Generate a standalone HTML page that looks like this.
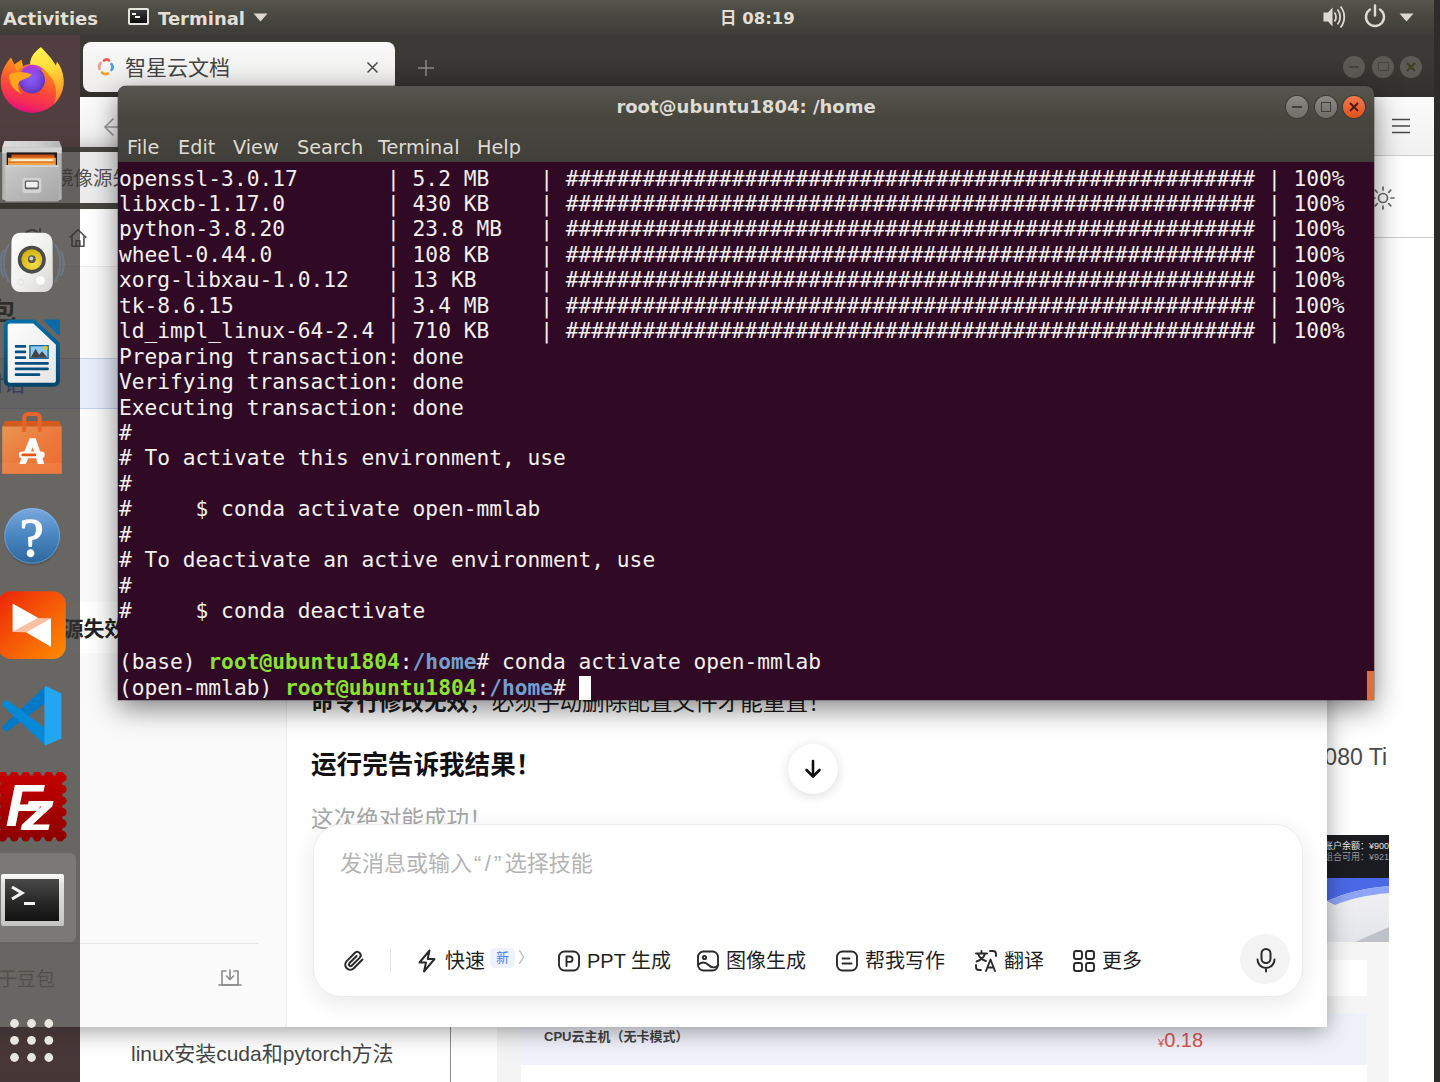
<!DOCTYPE html>
<html lang="zh">
<head>
<meta charset="utf-8">
<title>Terminal</title>
<style>
*{box-sizing:border-box;margin:0;padding:0}
html,body{width:1440px;height:1082px;overflow:hidden;background:#3c2f38}
body{position:relative;font-family:"Liberation Sans","Noto Sans CJK SC",sans-serif;color:#222}
.abs{position:absolute}
/* ---------- wallpaper under dock ---------- */
#wall{left:0;top:0;width:80px;height:1082px;background:linear-gradient(#a66476 0,#a06072 15%,#7a4452 100%)}
/* ---------- firefox ---------- */
#ff{left:80px;top:35px;width:1354px;height:1047px;background:#fff;overflow:hidden}
#fftabs{left:0;top:0;width:1354px;height:62px;background:linear-gradient(#3c3b37 0,#3a3935 40%,#31302d 100%)}
#fftab{left:3px;top:7px;width:312px;height:50px;background:linear-gradient(#f8f8f8,#efeeed);border-radius:8px}
#fftab .t{left:42px;top:12px;font-size:21px;color:#444;white-space:nowrap;line-height:28px}
#ffnav{left:0;top:62px;width:1354px;height:59px;background:linear-gradient(#fbfbfb,#f1f1f1);border-bottom:1px solid #cfcfcf}
#ffhead{left:0;top:121px;width:1354px;height:82px;background:#fff;border-bottom:1px solid #cdcdcd}
#ffpage{left:0;top:203px;width:1354px;height:844px;background:#fff}
/* ---------- doubao ---------- */
#db{left:-60px;top:147px;width:1387px;height:880px;background:#fff;box-shadow:0 4px 22px rgba(0,0,0,.38);overflow:hidden}
/* ---------- dock ---------- */
#dock{left:0;top:35px;width:80px;height:1047px;background:rgba(52,50,46,.74)}
/* ---------- terminal ---------- */
#term{left:118px;top:86px;width:1256px;height:614px;border-radius:8px 8px 0 0;box-shadow:0 8px 28px rgba(0,0,0,.5),0 0 0 .5px rgba(40,40,36,.5);overflow:hidden;background:#300a24}
#tbar{left:0;top:0;width:1256px;height:76px;background:linear-gradient(#56554f 0,#48473f 40%,#403f3a 100%)}
#tbar .title{left:0;top:8px;width:1256px;text-align:center;font-weight:bold;font-size:18px;color:#dfdbd2;line-height:26px;font-family:"DejaVu Sans","Liberation Sans",sans-serif}
#tmenu{left:9px;top:48.5px;font-size:19.3px;color:#dfdbd2;white-space:nowrap;line-height:26px;font-family:"DejaVu Sans","Liberation Sans",sans-serif}
#tmenu span{position:absolute;top:0}
#tout{left:1px;top:79.5px;font-family:"DejaVu Sans Mono","Liberation Mono",monospace;font-size:21.21px;line-height:25.45px;color:#f2f0ee;white-space:pre}
#tout b.g{color:#8ae234}
#tout b.b{color:#729fcf}
.cur{display:inline-block;width:12px;height:24px;background:#fff;vertical-align:-5px}

/* firefox details */
.wbtn{width:22px;height:22px;border-radius:50%;background:#5b5a54;top:21px}
#ffpage .sideline{left:370px;top:0;width:1px;height:844px;background:#8e8e8e}
/* doubao details */
#db .line1{left:0;top:0;width:1387px;height:5px;background:#46453f}
#db .tabs{left:0;top:5px;width:1387px;height:51px;background:#ececec}
#db .line2{left:0;top:56px;width:1387px;height:6px;background:#47463f}
#db .tool{left:0;top:62px;width:1387px;height:58px;background:#fff;border-bottom:1px solid #ececec}
#db .side{left:0;top:120px;width:347px;height:760px;background:#fafafa;border-right:1px solid #ececec}
#db .main{left:348px;top:120px;width:1039px;height:760px;background:#fff}
#db .sel{left:0;top:211px;width:330px;height:51px;background:#e8edfb;border:1px solid #c3d0f3}
#db .row2{left:130px;top:455px;width:210px;height:51px;background:#fff;border-radius:8px}
#inp{left:373px;top:677px;width:990px;height:173px;border-radius:28px;background:#fff;border:1px solid #ececec;box-shadow:0 6px 24px rgba(0,0,0,.09)}
.tb{top:122px;font-size:20px;color:#1f1f1f;white-space:nowrap;line-height:28px}
/* ---------- top panel ---------- */
#panel{left:0;top:0;width:1440px;height:35px;background:linear-gradient(#56554d 0,#48473f 50%,#3d3c38 100%);color:#e3dfd6;font-weight:bold;font-size:18px;font-family:"DejaVu Sans","Liberation Sans","Noto Sans CJK SC",sans-serif}
#panel .p{top:5.5px;line-height:26px;white-space:nowrap}
#redge{left:1434px;top:0;width:6px;height:1082px;background:#2c2c2b}
</style>
</head>
<body>
<div id="wall" class="abs"></div>

<!-- FIREFOX WINDOW -->
<div id="ff" class="abs">
  <div id="fftabs" class="abs">
    <div id="fftab" class="abs">
      <svg class="abs" style="left:13px;top:15px" width="20" height="20" viewBox="0 0 20 20" fill="none" stroke-width="2.600" stroke-linecap="round"><path d="M8 3.500c1.500-1.500 4-1.500 5 0" stroke="#e85a4f"/><path d="M15.500 7c1.500 2 1.300 4.500 0 6" stroke="#4a9be8"/><path d="M12 16.500c-2 1-4.500.5-6-1" stroke="#f0a030"/><path d="M3.500 12c-.8-2-.3-4.500 1.200-6" stroke="#e85a4f" opacity=".6"/></svg>
      <div class="t abs">智星云文档</div>
      <svg class="abs" style="left:283px;top:19px" width="13" height="13" viewBox="0 0 13 13" stroke="#4a4a4a" stroke-width="1.500"><path d="M1.500 1.500l10 10M11.500 1.500l-10 10"/></svg>
    </div>
    <svg class="abs" style="left:337px;top:24px" width="18" height="18" viewBox="0 0 18 18" stroke="#8d8c88" stroke-width="1.500"><path d="M9 1v16M1 9h16"/></svg>
    <div class="wbtn abs" style="left:1263px"><div class="abs" style="left:6px;top:10px;width:10px;height:2px;background:#46453f"></div></div>
    <div class="wbtn abs" style="left:1292px"><div class="abs" style="left:6px;top:6px;width:11px;height:9px;border:1.500px solid #46453f"></div></div>
    <div class="wbtn abs" style="left:1320px"><svg class="abs" style="left:6px;top:6px" width="10" height="10" viewBox="0 0 10 10" stroke="#3e3d20" stroke-width="1.800"><path d="M1 1l8 8M9 1l-8 8"/></svg></div>
  </div>
  <div id="ffnav" class="abs">
    <svg class="abs" style="left:23px;top:19px" width="22" height="22" viewBox="0 0 22 22" fill="none" stroke="#9a9a9a" stroke-width="1.700" stroke-linecap="round" stroke-linejoin="round"><path d="M20 11H2M10 3l-8 8 8 8"/></svg>
    <svg class="abs" style="left:1312px;top:21px" width="18" height="16" viewBox="0 0 18 16" stroke="#4a4a4a" stroke-width="1.700"><path d="M0 1.500h18M0 8h18M0 14.500h18"/></svg>
  </div>
  <div id="ffhead" class="abs">
    <svg class="abs" style="left:1290px;top:29px" width="26" height="26" viewBox="0 0 26 26" fill="none" stroke="#6b6b6b" stroke-width="1.700" stroke-linecap="round"><circle cx="13" cy="13" r="4.500"/><path d="M13 2v3M13 21v3M2 13h3M21 13h3M5.200 5.200l2.100 2.100M18.700 18.700l2.100 2.100M5.200 20.800l2.100-2.100M18.700 7.300l2.100-2.100"/></svg>
  </div>
  <div id="ffpage" class="abs">
    <div class="sideline abs"></div>
    <div class="abs" style="left:51px;top:801px;font-size:21px;line-height:30px;color:#454545;white-space:nowrap">linux安装cuda和pytorch方法</div>
    <div class="abs" style="left:417px;top:780px;width:24px;height:64px;background:#f3f3f4"></div>
    <div class="abs" style="left:441px;top:780px;width:774px;height:47px;background:#f0f1fa"></div>
    <div class="abs" style="left:464px;top:789px;font-size:13px;font-weight:bold;line-height:20px;color:#444;white-space:nowrap">CPU云主机（无卡模式）</div>
    <div class="abs" style="left:1078px;top:789px;font-size:20px;line-height:26px;color:#d8554f;white-space:nowrap"><span style="font-size:11px">¥</span>0.18</div>
    <div class="abs" style="left:1130px;top:503px;width:177px;font-size:23px;line-height:32px;color:#4a4a4a;white-space:nowrap;text-align:right">RTX 2080 Ti</div>
    <div class="abs" style="left:1215px;top:704px;width:94px;height:140px;background:#f5f5f6"></div>
    <svg class="abs" style="left:1215px;top:597px" width="94" height="107" viewBox="0 0 94 107"><defs><linearGradient id="sw9" x1="0" y1="0" x2="0" y2="1"><stop offset="0" stop-color="#dfe1ea"/><stop offset=".5" stop-color="#f1f1f4"/><stop offset="1" stop-color="#e4e5ea"/></linearGradient></defs><rect width="94" height="107" fill="url(#sw9)"/><path d="M0 43h94v8C70 53 50 58 32 66H0z" fill="#4b69e6"/><path d="M32 66C50 58 70 53 94 51v7C72 60 54 64 40 70z" fill="#8ea4f6"/><path d="M94 92L60 107h34z" fill="#bfc1c9"/></svg>
    <div class="abs" style="left:1215px;top:597px;width:94px;height:43px;background:#1b1b22;color:#e8e8e8;font-size:9px;line-height:11px;white-space:nowrap;overflow:hidden;padding:6px 0 0 29px">账户余额：¥900.00<br><span style="color:#9a9a9a">组合可用：¥921.00</span></div>
    <div class="abs" style="left:1215px;top:722px;width:72px;height:36px;background:#fff"></div>
    <div class="abs" style="left:1215px;top:775px;width:72px;height:52px;background:#f0f2fb"></div>
    <div class="abs" style="left:1215px;top:827px;width:72px;height:20px;background:#fff"></div>
  </div>
</div>

<!-- DOUBAO WINDOW -->
<div id="db" class="abs">
  <div class="line1 abs"></div>
  <div class="tabs abs"><div class="abs" style="left:88px;top:12px;font-size:19.5px;line-height:28px;color:#555;white-space:nowrap">pip镜像源失效修复</div></div>
  <div class="line2 abs"></div>
  <div class="tool abs">
    <svg class="abs" style="left:80px;top:17px" width="24" height="24" viewBox="0 0 24 24" fill="none" stroke="#555" stroke-width="1.8" stroke-linecap="round" stroke-linejoin="round"><path d="M20 12a8 8 0 1 1-2.6-5.9"/><path d="M20 3v5h-5"/></svg>
    <svg class="abs" style="left:127px;top:18px" width="22" height="22" viewBox="0 0 24 24" fill="none" stroke="#555" stroke-width="1.8" stroke-linejoin="round"><path d="M3 11.5 12 3l9 8.5"/><path d="M5.5 10v11h13V10"/><path d="M10 21v-6h4v6"/></svg>
  </div>
  <div class="side abs"></div>
  <div class="abs" style="left:26px;top:147px;font-size:25px;font-weight:bold;color:#222;line-height:34px;white-space:nowrap">豆包</div>
  <div class="sel abs"><div class="abs" style="left:21px;top:11px;font-size:21px;line-height:28px;color:#3a62d8;white-space:nowrap">新对话</div></div>
  <div class="row2 abs"></div>
  <div class="abs" style="left:49px;top:467px;font-size:21px;font-weight:bold;line-height:30px;color:#222;white-space:nowrap">pip镜像源失效修复</div>
  <div class="abs" style="left:0;top:796px;width:318px;height:1px;background:#e6e6e6"></div>
  <div class="abs" style="left:39px;top:819px;font-size:19px;line-height:28px;color:#a4a4a4;white-space:nowrap">关于豆包</div>
  <svg class="abs" style="left:278px;top:820px" width="24" height="22" viewBox="0 0 24 22" fill="none" stroke="#8a8a8a" stroke-width="1.6" stroke-linecap="round" stroke-linejoin="round"><path d="M8 4H4v14h16V4h-4"/><path d="M1 18h22"/><path d="M12 3v9"/><path d="M8.5 9l3.500 3.500L15.500 9"/></svg>
  <div class="main abs"></div>
  <div class="abs" style="left:371px;top:541px;font-size:22.6px;line-height:30px;color:#1d1d1d;white-space:nowrap"><b>命令行修改无效</b>，必须手动删除配置文件才能重置！</div>
  <div class="abs" style="left:371px;top:601px;font-size:25.6px;font-weight:bold;line-height:34px;color:#111;white-space:nowrap">运行完告诉我结果！</div>
  <div class="abs" style="left:371px;top:658px;font-size:22.6px;line-height:30px;color:#a6a6a6;white-space:nowrap">这次绝对能成功！</div>
  <div class="abs" style="left:848px;top:597px;width:50px;height:50px;border-radius:50%;background:#fff;box-shadow:0 2px 12px rgba(0,0,0,.14)">
    <svg class="abs" style="left:13px;top:13px" width="24" height="24" viewBox="0 0 24 24" fill="none" stroke="#111" stroke-width="2.6" stroke-linecap="round" stroke-linejoin="round"><path d="M12 4v15"/><path d="M5.500 13l6.500 6.500 6.500-6.500"/></svg>
  </div>
  <div id="inp" class="abs">
    <div class="abs" style="left:26px;top:24px;font-size:22px;line-height:30px;color:#b4b4b4;white-space:nowrap">发消息或输入<span style="letter-spacing:3.3px;margin-left:2px">“/”</span>选择技能</div>
    <div class="abs" style="left:76px;top:124px;width:1px;height:24px;background:#e4e4e4"></div>
    <div class="tb abs" style="left:131px">快速</div>
    <div class="abs" style="left:176px;top:123px;width:25px;height:20px;border-radius:5px;background:#eef3ff;color:#4a7cf3;font-size:13px;line-height:20px;text-align:center">新</div>
    <div class="abs" style="left:204px;top:122px;font-size:15px;line-height:22px;color:#b0b0b0">〉</div>
    <div class="tb abs" style="left:273px">PPT 生成</div>
    <div class="tb abs" style="left:412px">图像生成</div>
    <div class="tb abs" style="left:551px">帮我写作</div>
    <div class="tb abs" style="left:690px">翻译</div>
    <div class="tb abs" style="left:788px">更多</div>
    <div class="abs" style="left:926px;top:109px;width:50px;height:50px;border-radius:50%;background:#f3f3f4"></div>
    <svg class="abs" style="left:27px;top:123px" width="26" height="26" viewBox="0 0 26 26" fill="none" stroke="#2a2a2a" stroke-width="2" stroke-linecap="round" stroke-linejoin="round"><path d="M21.500 11.500 12.800 20.200a5 5 0 0 1-7.100-7.100l8.300-8.300a3.400 3.400 0 0 1 4.800 4.800l-8.100 8.100a1.700 1.700 0 0 1-2.400-2.400l7.300-7.300"/></svg>
    <svg class="abs" style="left:101px;top:123px" width="24" height="26" viewBox="0 0 24 26" fill="none" stroke="#2a2a2a" stroke-width="2" stroke-linecap="round" stroke-linejoin="round"><path d="M14.500 2.500 4.500 14.500h6.500l-2 9 10.500-12.500h-6.800z"/></svg>
    <svg class="abs" style="left:243px;top:124px" width="24" height="24" viewBox="0 0 24 24" fill="none" stroke="#2a2a2a" stroke-width="1.9" stroke-linecap="round" stroke-linejoin="round"><rect x="2" y="2.500" width="20" height="19" rx="5.500"/><path d="M9.500 17V7.500h3.300a2.700 2.700 0 0 1 0 5.400H9.500"/></svg>
    <svg class="abs" style="left:382px;top:124px" width="24" height="24" viewBox="0 0 24 24" fill="none" stroke="#2a2a2a" stroke-width="1.900" stroke-linecap="round" stroke-linejoin="round"><rect x="2" y="2.500" width="20" height="19" rx="5.500"/><circle cx="8.500" cy="8.500" r="1.600"/><path d="M2.500 15.500c4-3.500 7-2.500 10 .5s6 3 9 1"/></svg>
    <svg class="abs" style="left:521px;top:124px" width="24" height="24" viewBox="0 0 24 24" fill="none" stroke="#2a2a2a" stroke-width="1.900" stroke-linecap="round" stroke-linejoin="round"><rect x="2" y="2.500" width="20" height="19" rx="5.500"/><path d="M7.500 9.500h7M7.500 14.500h9"/></svg>
    <svg class="abs" style="left:659px;top:123px" width="26" height="26" viewBox="0 0 26 26" fill="none" stroke="#2a2a2a" stroke-width="1.900" stroke-linecap="round" stroke-linejoin="round"><path d="M3 5.500h11M8.500 3v2.500M5 5.500c1.200 4 4.500 6.500 8 7.500M12 5.500C11 9.500 8 12 3.500 13.500"/><path d="M13 23l4.500-11.500L22 23M14.700 19.500h5.600"/><path d="M17 3h3a3 3 0 0 1 3 3v2M3 17v2a3 3 0 0 0 3 3h2"/></svg>
    <svg class="abs" style="left:758px;top:123px" width="24" height="26" viewBox="0 0 24 26" fill="none" stroke="#2a2a2a" stroke-width="1.900" stroke-linejoin="round"><rect x="2" y="3" width="8" height="8" rx="2.300"/><rect x="14" y="3" width="8" height="8" rx="2.300"/><rect x="2" y="15" width="8" height="8" rx="2.300"/><rect x="14" y="15" width="8" height="8" rx="2.300"/></svg>
    <svg class="abs" style="left:939px;top:121px" width="26" height="28" viewBox="0 0 26 28" fill="none" stroke="#2a2a2a" stroke-width="2" stroke-linecap="round" stroke-linejoin="round"><rect x="8.500" y="3" width="9" height="14" rx="4.500"/><path d="M4.500 13.500a8.500 8.500 0 0 0 17 0M13 22v3.500"/></svg>
  </div>
</div>

<!-- DOCK -->
<div id="dock" class="abs">
  <!-- firefox -->
  <svg class="abs" style="left:0;top:3px" width="68" height="80" viewBox="0 0 68 80">
    <defs>
      <linearGradient id="fx1" gradientUnits="userSpaceOnUse" x1="40" y1="10" x2="22" y2="75"><stop offset="0" stop-color="#ffb01a"/><stop offset=".3" stop-color="#ff8a1a"/><stop offset=".62" stop-color="#ff4a38"/><stop offset=".85" stop-color="#f3285a"/><stop offset="1" stop-color="#de0a86"/></linearGradient>
      <radialGradient id="fx2" gradientUnits="userSpaceOnUse" cx="31" cy="41" r="15"><stop offset="0" stop-color="#8a5ff8"/><stop offset=".55" stop-color="#7a48e0"/><stop offset="1" stop-color="#5a35b5"/></radialGradient>
      <linearGradient id="fx3" gradientUnits="userSpaceOnUse" x1="42" y1="9" x2="56" y2="66"><stop offset="0" stop-color="#fff550"/><stop offset=".4" stop-color="#ffd93a"/><stop offset=".75" stop-color="#ffa92a"/><stop offset="1" stop-color="#ff7a30"/></linearGradient>
      <linearGradient id="fx4" gradientUnits="userSpaceOnUse" x1="31" y1="27" x2="31" y2="42"><stop offset="0" stop-color="#c032dc"/><stop offset="1" stop-color="#8a5ff8" stop-opacity="0"/></linearGradient>
    </defs>
    <path d="M11 19.600C5 26 .7 35 .7 44 .7 61 15 74.700 32 74.700c18 0 31.600-13.700 31.600-30.700 0-8-2.600-15-6.600-20l-1 4C52 20 45 14 41 9.200 35 13 30 20 30.300 26c-2.300 0-5.300 1-7.300 2.500l-1.600-6.700-6.900 4.700z" fill="url(#fx1)"/>
    <path d="M41 9.200C45 14 52 20 56 28l1-4c4 5 6.600 12 6.600 20 0 8-3.600 16-9.600 22 4-10 2-22-4-28-4-5-6-8-12-10-5-1-7.700 0-7.700-2C30 20 35 13 41 9.200z" fill="url(#fx3)"/>
    <circle cx="31.800" cy="42.100" r="13.300" fill="url(#fx2)"/>
    <path d="M22 31c5-5 14-5.500 19-1.500l3 2.500-5 .5c3 3 5 6 5.500 9.500H20c-.5-4 .5-8 2-11z" fill="url(#fx4)"/>
    <path d="M9 37c5-4 15-4 23-.5-4 4.500-10 4.500-13 7.500-2 4 0 9 3 12-8-3-13-10-13-19z" fill="#ffa51e"/>
    <path d="M14.500 26.500l6.900-4.700L23 28.500c-3 1.500-5 3.500-6 5.500z" fill="#ff9a1c"/>
  </svg>
  <!-- files -->
  <svg class="abs" style="left:2px;top:106px" width="60" height="62" viewBox="0 0 60 62">
    <defs><linearGradient id="fl1" x1="0" y1="0" x2="1" y2="0"><stop offset="0" stop-color="#dcdcdc"/><stop offset=".6" stop-color="#cdcdcd"/><stop offset="1" stop-color="#b4b4b4"/></linearGradient>
    <linearGradient id="fl2" x1="0" y1="0" x2="1" y2="1"><stop offset="0" stop-color="#cacaca"/><stop offset="1" stop-color="#a6a6a6"/></linearGradient>
    <linearGradient id="fl3" x1="0" y1="0" x2="0" y2="1"><stop offset="0" stop-color="#c24a12"/><stop offset="1" stop-color="#ea7a2a"/></linearGradient></defs>
    <rect x=".2" y="6" width="59.500" height="53" rx="1.500" fill="#b2b2b2"/>
    <path d="M2.400 0h54.800l2.500 6.300H.2z" fill="url(#fl1)"/>
    <rect x=".2" y="6.300" width="59.500" height="6" fill="#d2d2d2"/>
    <rect x="4.700" y="11.400" width="50.300" height="13" fill="#1c1a18"/>
    <rect x="9.500" y="13.500" width="43" height="6" fill="url(#fl3)"/>
    <rect x="6" y="16.800" width="47.800" height="7.600" fill="#f2a648"/>
    <rect x="6" y="20.300" width="47.800" height="1.600" fill="#e07a2c"/>
    <rect x="8.700" y="18.200" width="42.500" height="1.900" fill="#fbecd6"/>
    <rect x="3.200" y="24.300" width="53.600" height="36.200" rx="1.200" fill="url(#fl2)"/>
    <rect x="3.200" y="24.300" width="53.600" height="1.600" fill="#d8d8d8"/>
    <rect x="20.200" y="36.900" width="19.200" height="15.100" rx="3" fill="#d3d3d3"/>
    <rect x="22.800" y="39.500" width="14" height="8.800" rx="1.600" fill="#5c5c5c"/>
    <rect x="24" y="40.800" width="11.700" height="5.700" rx="1" fill="#f0f0f0"/>
  </svg>
  <!-- rhythmbox -->
  <svg class="abs" style="left:0;top:195px" width="68" height="66" viewBox="0 0 68 66">
    <defs><linearGradient id="rb1" x1="0" y1="0" x2="1" y2="1"><stop offset="0" stop-color="#ffffff"/><stop offset=".55" stop-color="#efefee"/><stop offset="1" stop-color="#d6d6d4"/></linearGradient>
    <radialGradient id="rb2" cx=".6" cy=".7" r=".7"><stop offset="0" stop-color="#f5e04a"/><stop offset="1" stop-color="#d2b010"/></radialGradient></defs>
    <g fill="none" stroke="#7da2d4" stroke-width="2.200" opacity=".28"><path d="M9 14c-7 11-7 27 0 38M3.500 20c-4 8-4 19 0 27M55 14c7 11 7 27 0 38M61 21c3.500 8 3.500 17 0 25"/></g>
    <path d="M20 2.700h23.500c5 0 8.400 3.500 9 9l.4 40c0 6-3.600 10.200-9.400 10.200H20.500c-5.800 0-9.400-4.200-9.400-10.200l.4-40c.6-5.500 3.500-9 8.500-9z" fill="url(#rb1)"/>
    <circle cx="31.800" cy="29.700" r="14" fill="#4b4c4a"/>
    <circle cx="31.800" cy="29.700" r="10.400" fill="url(#rb2)"/>
    <circle cx="31.800" cy="29.200" r="3.900" fill="#5a5850"/>
    <circle cx="31.300" cy="28.600" r="2" fill="#cfcfcf"/>
    <circle cx="40.300" cy="50.400" r="5" fill="#fbfbfb" stroke="#dadad8" stroke-width=".8"/>
    <circle cx="21" cy="52.300" r="2.800" fill="none" stroke="#dededc" stroke-width=".8"/>
  </svg>
  <!-- writer -->
  <svg class="abs" style="left:3px;top:283px" width="60" height="72" viewBox="0 0 60 72">
    <defs><linearGradient id="wr1" x1="0" y1="0" x2="0" y2="1"><stop offset="0" stop-color="#056ea8"/><stop offset="1" stop-color="#04456c"/></linearGradient>
    <linearGradient id="wr2" x1="0" y1="0" x2="1" y2="1"><stop offset="0" stop-color="#ffffff"/><stop offset="1" stop-color="#e4e4e4"/></linearGradient></defs>
    <path d="M42 1.400h13.400a1.500 1.500 0 0 1 1.500 1.500V16.500a1 1 0 0 1-1.700.7L41.300 3a1 1 0 0 1 .7-1.600z" fill="#0a6ba8"/>
    <path d="M6.700 3.400H30.900L54.900 25.800V62.700a4 4 0 0 1-4 4H6.700a4 4 0 0 1-4-4V7.400a4 4 0 0 1 4-4z" fill="url(#wr2)" stroke="url(#wr1)" stroke-width="4" stroke-linejoin="round"/>
    <g fill="#04507f"><rect x="11.800" y="27" width="11.400" height="2.700" rx="1"/><rect x="11.800" y="32.500" width="11.400" height="2.700" rx="1"/><rect x="11.800" y="38.200" width="11.400" height="2.700" rx="1"/><rect x="11.800" y="44" width="34" height="2.700" rx="1"/><rect x="11.800" y="49.600" width="34" height="2.700" rx="1"/><rect x="11.800" y="55.200" width="25.500" height="2.700" rx="1"/></g>
    <rect x="26.200" y="27" width="19.600" height="14" fill="#0a68a4"/>
    <rect x="27.600" y="28.300" width="16.800" height="11.400" fill="#8ecbf2"/>
    <path d="M27.600 39.700l5-9 3.500 6 3-3.500 5.300 6.500z" fill="#454545"/>
    <circle cx="42.600" cy="30" r="2.200" fill="#e8c22c"/>
  </svg>
  <!-- software -->
  <svg class="abs" style="left:1px;top:375px" width="62" height="66" viewBox="0 0 62 66">
    <defs><linearGradient id="sw1" x1="0" y1="0" x2="1" y2="1"><stop offset="0" stop-color="#e99552"/><stop offset=".5" stop-color="#ec7a3c"/><stop offset="1" stop-color="#eb6d30"/></linearGradient></defs>
    <path d="M4.200 11H58l2.700 5.400H1.200z" fill="#d65a1e"/>
    <rect x="1.200" y="16.400" width="59.500" height="47.400" fill="url(#sw1)"/>
    <rect x="1.200" y="53" width="59.500" height="10.800" fill="#f08a50" opacity=".45"/>
    <path d="M23.200 22V8a4 4 0 0 1 4-4h7.600a4 4 0 0 1 4 4V22" fill="none" stroke="#e7642c" stroke-width="4"/>
    <path d="M28.800 28.300h5.900L43.400 54h-6.700L31.750 37 24.900 54h-6.700z" fill="#fff"/>
    <rect x="17.900" y="41.600" width="25.800" height="6.600" rx="3.300" fill="#fff"/>
    <rect x="20.400" y="43.500" width="14.800" height="2.800" rx="1.400" fill="#e8540a"/>
  </svg>
  <!-- help -->
  <svg class="abs" style="left:3px;top:472px" width="60" height="62" viewBox="0 0 60 62">
    <defs><linearGradient id="hp1" x1="0" y1="0" x2="0" y2="1"><stop offset="0" stop-color="#7ba8de"/><stop offset=".45" stop-color="#4c89c4"/><stop offset="1" stop-color="#2c669b"/></linearGradient></defs>
    <ellipse cx="29.500" cy="33" rx="27" ry="26" fill="#000" opacity=".12"/>
    <circle cx="29.200" cy="28.900" r="28" fill="url(#hp1)"/>
    <circle cx="29.200" cy="28.900" r="27.300" fill="none" stroke="#9cc0ea" stroke-width=".8" opacity=".6"/>
    <text x="28.800" y="49" font-family="Liberation Serif,serif" font-size="54" fill="#fff" stroke="#fff" stroke-width="1.300" stroke-linejoin="round" text-anchor="middle">?</text>
  </svg>
  <!-- orange app -->
  <svg class="abs" style="left:-2px;top:556px" width="70" height="70" viewBox="0 0 70 70">
    <defs><linearGradient id="oa1" x1="0" y1="0" x2="1" y2="1"><stop offset="0" stop-color="#ee2208"/><stop offset=".5" stop-color="#f55a06"/><stop offset="1" stop-color="#ff8c00"/></linearGradient></defs>
    <rect x="0" y="0.300" width="67.800" height="67.700" rx="13" fill="url(#oa1)"/>
    <path d="M14.600 41L40.400 27 53 27.300 27.900 41.300z" fill="#ffbfa3"/>
    <path d="M14.600 12.500V41L40.400 27z" fill="#fff"/>
    <path d="M53 27.300v28.400L27.900 41.300z" fill="#fff"/>
  </svg>
  <!-- vscode -->
  <svg class="abs" style="left:1px;top:650px" width="62" height="62" viewBox="0 0 62 62">
    <path d="M44.500 1V18L6.400 46.600a1.500 1.500 0 0 1-2 0L1.600 43.400a1.500 1.500 0 0 1 0-2.200z" fill="#0079c6"/>
    <path d="M1.600 20.500a1.500 1.500 0 0 1 0-2.200L4.400 15.400a1.500 1.500 0 0 1 2-.2L44.500 43.200V60.600z" fill="#0389d8"/>
    <path d="M44.500 1L60.400 8.500V53.600L44.500 60.600a2 2 0 0 1-1-1.500V2.500a2 2 0 0 1 1-1.500z" fill="#23a6f2"/>
  </svg>
  <!-- filezilla -->
  <svg class="abs" style="left:-3px;top:737px" width="70" height="70" viewBox="0 0 70 70">
    <defs><linearGradient id="fz1" gradientUnits="userSpaceOnUse" x1="0" y1="0" x2="0" y2="69"><stop offset="0" stop-color="#c60000"/><stop offset="1" stop-color="#8c0000"/></linearGradient></defs>
    <g fill="url(#fz1)"><rect x="3.500" y="3.500" width="61.800" height="61.800"/><circle cx="5.7" cy="3.5" r="4.300"/><circle cx="5.7" cy="65.3" r="4.300"/><circle cx="3.5" cy="5.7" r="4.300"/><circle cx="65.3" cy="5.7" r="4.300"/><circle cx="17.2" cy="3.5" r="4.300"/><circle cx="17.2" cy="65.3" r="4.300"/><circle cx="3.5" cy="17.2" r="4.300"/><circle cx="65.3" cy="17.2" r="4.300"/><circle cx="28.7" cy="3.5" r="4.300"/><circle cx="28.7" cy="65.3" r="4.300"/><circle cx="3.5" cy="28.7" r="4.300"/><circle cx="65.3" cy="28.7" r="4.300"/><circle cx="40.1" cy="3.5" r="4.300"/><circle cx="40.1" cy="65.3" r="4.300"/><circle cx="3.5" cy="40.1" r="4.300"/><circle cx="65.3" cy="40.1" r="4.300"/><circle cx="51.6" cy="3.5" r="4.300"/><circle cx="51.6" cy="65.3" r="4.300"/><circle cx="3.5" cy="51.6" r="4.300"/><circle cx="65.3" cy="51.6" r="4.300"/><circle cx="63.1" cy="3.5" r="4.300"/><circle cx="63.1" cy="65.3" r="4.300"/><circle cx="3.5" cy="63.1" r="4.300"/><circle cx="65.3" cy="63.1" r="4.300"/></g>
    <text x="8.500" y="54.400" font-family="Liberation Sans,sans-serif" font-weight="bold" font-style="italic" font-size="59" fill="#fff" textLength="38" lengthAdjust="spacingAndGlyphs">F</text>
    <text x="24" y="58.200" font-family="Liberation Sans,sans-serif" font-weight="bold" font-style="italic" font-size="56" fill="#fff" textLength="33" lengthAdjust="spacingAndGlyphs">z</text>
  </svg>
  <!-- terminal (active) -->
  <div class="abs" style="left:0;top:818px;width:76px;height:89px;border-radius:0 6px 6px 0;background:rgba(255,255,255,.13)"></div>
  <svg class="abs" style="left:0;top:838px" width="66" height="56" viewBox="0 0 66 56">
    <defs><linearGradient id="tm1" x1="0" y1="0" x2="0" y2="1"><stop offset="0" stop-color="#4a4a4a"/><stop offset=".5" stop-color="#2a2a2a"/><stop offset="1" stop-color="#111"/></linearGradient><linearGradient id="tm2" x1="0" y1="0" x2="0" y2="1"><stop offset="0" stop-color="#fbfbfb"/><stop offset=".2" stop-color="#e2e2e0"/><stop offset="1" stop-color="#c4c4c2"/></linearGradient></defs>
    <rect x="1" y="1" width="63" height="52" rx="2" fill="url(#tm2)"/>
    <rect x="5" y="6" width="54" height="42" fill="url(#tm1)"/>
    <path d="M12 14l10 6-10 6" fill="none" stroke="#f2f2f2" stroke-width="3.200"/>
    <rect x="24" y="29" width="11" height="3" fill="#f2f2f2"/>
  </svg>
  <!-- app grid -->
  <svg class="abs" style="left:8px;top:982px" width="48" height="48" viewBox="0 0 48 48" fill="#e9e5df">
    <circle cx="6.500" cy="6.500" r="4.400"/><circle cx="23.500" cy="6.500" r="4.400"/><circle cx="40.800" cy="6.500" r="4.400"/>
    <circle cx="6.500" cy="23.300" r="4.400"/><circle cx="23.500" cy="23.300" r="4.400"/><circle cx="40.800" cy="23.300" r="4.400"/>
    <circle cx="6.500" cy="40.500" r="4.400"/><circle cx="23.500" cy="40.500" r="4.400"/><circle cx="40.800" cy="40.500" r="4.400"/>
  </svg>
</div>

<!-- TERMINAL -->
<div id="term" class="abs">
  <div id="tbar" class="abs">
    <div class="title abs">root@ubuntu1804: /home</div>
    <div class="abs" style="left:1168px;top:10px;width:22px;height:22px;border-radius:50%;background:linear-gradient(#8b8a82,#6e6d66);box-shadow:0 0 0 1px #3a3935"><div class="abs" style="left:6px;top:10px;width:10px;height:2px;background:#3f3e39"></div></div>
    <div class="abs" style="left:1197px;top:10px;width:22px;height:22px;border-radius:50%;background:linear-gradient(#8b8a82,#6e6d66);box-shadow:0 0 0 1px #3a3935"><div class="abs" style="left:6px;top:6px;width:10px;height:10px;border:1.500px solid #3f3e39"></div></div>
    <div class="abs" style="left:1225px;top:10px;width:22px;height:22px;border-radius:50%;background:linear-gradient(#f37a4c,#e2501c);box-shadow:0 0 0 1px #3a3935"><svg class="abs" style="left:6px;top:6px" width="10" height="10" viewBox="0 0 10 10" stroke="#4a1808" stroke-width="1.800"><path d="M1 1l8 8M9 1l-8 8"/></svg></div>
    <div id="tmenu" class="abs"><span style="left:0">File</span><span style="left:51px">Edit</span><span style="left:106px">View</span><span style="left:170px">Search</span><span style="left:251px">Terminal</span><span style="left:350px">Help</span></div>
  </div>
<div class="abs" style="left:1249px;top:585px;width:7px;height:29px;background:#e0703a"></div>
<div id="tout" class="abs">openssl-3.0.17       | 5.2 MB    | ###################################################### | 100%
libxcb-1.17.0        | 430 KB    | ###################################################### | 100%
python-3.8.20        | 23.8 MB   | ###################################################### | 100%
wheel-0.44.0         | 108 KB    | ###################################################### | 100%
xorg-libxau-1.0.12   | 13 KB     | ###################################################### | 100%
tk-8.6.15            | 3.4 MB    | ###################################################### | 100%
ld_impl_linux-64-2.4 | 710 KB    | ###################################################### | 100%
Preparing transaction: done
Verifying transaction: done
Executing transaction: done
#
# To activate this environment, use
#
#     $ conda activate open-mmlab
#
# To deactivate an active environment, use
#
#     $ conda deactivate

(base) <b class="g">root@ubuntu1804</b>:<b class="b">/home</b># conda activate open-mmlab
(open-mmlab) <b class="g">root@ubuntu1804</b>:<b class="b">/home</b># <span class="cur"></span></div>
</div>

<!-- TOP PANEL -->
<div id="panel" class="abs">
  <div class="p abs" style="left:3px">Activities</div>
  <div class="abs" style="left:128px;top:8px;width:21px;height:17px;background:#e6e6e1;border-radius:2px"><div class="abs" style="left:2px;top:2px;width:17px;height:13px;background:linear-gradient(#3a3a3a,#0c0c0c)"></div><div class="abs" style="left:4px;top:5px;width:4px;height:2px;background:#eee"></div><div class="abs" style="left:7px;top:8px;width:5px;height:2px;background:#eee"></div></div>
  <div class="p abs" style="left:158px">Terminal</div>
  <svg class="abs" style="left:253px;top:13px" width="15" height="9" viewBox="0 0 15 9"><path d="M0.500 0.500h14L7.500 8.500z" fill="#dcd8d0"/></svg>
  <div class="p abs" style="left:720px;font-size:16.5px;top:6px">日 08:19</div>
  <svg class="abs" style="left:1322px;top:5px" width="26" height="24" viewBox="0 0 26 24" fill="#dedad2"><path d="M1.500 7.500h4.500L10.500 2.500v19L6 16.500H1.500z"/><path d="M12.500 7.500c2 2.500 2 6.500 0 9" fill="none" stroke="#dedad2" stroke-width="1.800"/><path d="M15.500 4.500c3.500 4 3.500 11 0 15" fill="none" stroke="#dedad2" stroke-width="1.800"/><path d="M18.500 1.500c5 6 5 15 0 21" fill="none" stroke="#dedad2" stroke-width="1.800"/></svg>
  <svg class="abs" style="left:1363px;top:3px" width="24" height="25" viewBox="0 0 24 25" fill="none" stroke="#dedad2" stroke-width="2.400" stroke-linecap="round"><path d="M7 6.500a9 9 0 1 0 10 0"/><path d="M12 2.500v10"/></svg>
  <svg class="abs" style="left:1399px;top:13px" width="15" height="9" viewBox="0 0 15 9"><path d="M0.500 0.500h14L7.500 8.500z" fill="#dcd8d0"/></svg>
</div>
<div id="redge" class="abs"></div>
</body>
</html>
